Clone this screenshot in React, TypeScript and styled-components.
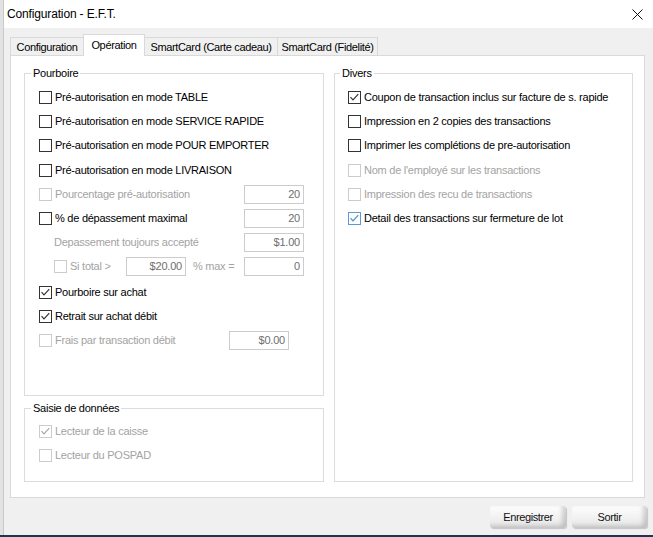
import React from "react";
import styled, { createGlobalStyle, css } from "styled-components";

const Global = createGlobalStyle`
  html, body { margin: 0; padding: 0; background: #e4e4e4; }
  body { font-family: "Liberation Sans", Arial, sans-serif; }
  #root { width: 653px; height: 537px; overflow: hidden; }
`;

const Screen = styled.div`
  width: 653px;
  height: 537px;
  box-sizing: border-box;
  padding-left: 3px;
  background: #e2e2e2;
  border-bottom: 2px solid #1d3550;
  display: flex;
`;

const Window = styled.div`
  flex: 1;
  display: flex;
  flex-direction: column;
  background: #f0f0f0;
  border-left: 1px solid #c9c9c9;
`;

const TitleBar = styled.div`
  height: 28px;
  flex: none;
  background: #ffffff;
  display: flex;
  align-items: center;
  justify-content: space-between;
  padding: 0 10px 0 3px;
  font-size: 12px;
  letter-spacing: -0.15px;
  color: #000;
`;

const CloseIcon = styled.svg`
  width: 11px;
  height: 11px;
  display: block;
`;

const Body = styled.div`
  flex: 1;
  display: flex;
  flex-direction: column;
  padding: 6px 8px 0 6px;
`;

const TabRow = styled.div`
  display: flex;
  align-items: flex-start;
  height: 22px;
  margin-bottom: -1px;
  position: relative;
  z-index: 1;
`;

const Tab = styled.div<{ $w: number; $active?: boolean }>`
  box-sizing: border-box;
  width: ${(p) => p.$w}px;
  margin-right: -1px;
  border: 1px solid #d9d9d9;
  border-bottom: none;
  display: flex;
  align-items: center;
  justify-content: center;
  font-size: 11px;
  letter-spacing: -0.35px;
  color: #000;
  white-space: nowrap;
  ${(p) =>
    p.$active
      ? css`
          height: 22px;
          background: #ffffff;
          padding-bottom: 2px;
          position: relative;
          z-index: 2;
        `
      : css`
          height: 18px;
          margin-top: 3px;
          background: #f0f0f0;
        `}
`;

const Panel = styled.div`
  height: 443px;
  box-sizing: border-box;
  flex: none;
  background: #ffffff;
  border: 1px solid #d9d9d9;
  padding: 10px 11px 15px 13px;
  display: flex;
  gap: 10px;
`;

const Column = styled.div<{ $w: number }>`
  width: ${(p) => p.$w}px;
  display: flex;
  flex-direction: column;
  gap: 5px;
`;

const Group = styled.fieldset<{ $h?: number; $pt: number; $pl: number; $pr?: number }>`
  margin: 0;
  min-width: 0;
  box-sizing: border-box;
  border: 1px solid #dcdcdc;
  padding: ${(p) => p.$pt}px ${(p) => p.$pr ?? 8}px 0 ${(p) => p.$pl}px;
  ${(p) => (p.$h ? `height: ${p.$h}px; flex: none;` : "flex: 1;")}
`;

const Legend = styled.legend<{ $offset: number }>`
  font-size: 11px;
  line-height: 14px;
  letter-spacing: -0.25px;
  padding: 0 2px;
  margin-left: ${(p) => p.$offset}px;
  color: #000;
`;

const Row = styled.div<{ $indent?: number; $mt?: number }>`
  height: 24px;
  display: flex;
  align-items: center;
  padding-left: ${(p) => p.$indent ?? 0}px;
  margin-top: ${(p) => p.$mt ?? 0}px;
`;

const Label = styled.span<{ $disabled?: boolean; $w?: number; $ml?: number }>`
  font-size: 11px;
  letter-spacing: -0.25px;
  white-space: nowrap;
  color: ${(p) => (p.$disabled ? "#a3a3a3" : "#000")};
  margin-left: ${(p) => p.$ml ?? 0}px;
  ${(p) => (p.$w ? `width: ${p.$w}px; flex: none;` : "")}
`;

type BoxState = "normal" | "disabled" | "focus";

const Box = styled.span<{ $state: BoxState }>`
  width: 13px;
  height: 13px;
  box-sizing: border-box;
  flex: none;
  margin-right: 3px;
  background: #fff;
  display: flex;
  align-items: center;
  justify-content: center;
  border: 1px solid
    ${(p) => (p.$state === "disabled" ? "#cccccc" : p.$state === "focus" ? "#5c9ad6" : "#333333")};
  color: ${(p) => (p.$state === "disabled" ? "#a8a8a8" : p.$state === "focus" ? "#4a8ed4" : "#333333")};
`;

const CheckSvg = styled.svg`
  width: 11px;
  height: 11px;
  display: block;
`;

const Field = styled.div<{ $w?: number; $mr?: number }>`
  width: ${(p) => p.$w ?? 60}px;
  height: 19px;
  box-sizing: border-box;
  flex: none;
  border: 1px solid #cccccc;
  background: #fff;
  margin-right: ${(p) => p.$mr ?? 0}px;
  display: flex;
  align-items: center;
  justify-content: flex-end;
  padding-right: 3px;
  font-size: 11px;
  letter-spacing: -0.2px;
  color: #6e6e6e;
`;

const Spacer = styled.div`
  flex: 1;
`;

const Footer = styled.div`
  display: flex;
  justify-content: flex-end;
  gap: 6px;
  margin-top: 8px;
  margin-right: -2px;
`;

const Button = styled.div<{ $w: number }>`
  width: ${(p) => p.$w}px;
  height: 22px;
  box-sizing: border-box;
  border-radius: 3px;
  display: flex;
  align-items: center;
  justify-content: center;
  font-size: 11px;
  letter-spacing: -0.4px;
  color: #111;
  background: linear-gradient(180deg, #fdfdfd 0%, #f1f1f1 55%, #e2e2e2 100%);
  box-shadow: inset -4px -2px 4px rgba(0, 0, 0, 0.16), 1px 1px 1px rgba(0, 0, 0, 0.18);
`;

const Check: React.FC<{ checked?: boolean; state?: BoxState }> = ({ checked, state = "normal" }) => (
  <Box $state={state}>
    {checked && (
      <CheckSvg viewBox="0 0 11 11">
        <polyline points="1.5,5.2 4,7.8 9.3,2.2" fill="none" stroke="currentColor" strokeWidth="1.2" />
      </CheckSvg>
    )}
  </Box>
);

export default function App() {
  return (
    <>
      <Global />
      <Screen>
        <Window>
          <TitleBar>
            <span>Configuration - E.F.T.</span>
            <CloseIcon viewBox="0 0 11 11">
              <path d="M0.5 0.5 L10.5 10.5 M10.5 0.5 L0.5 10.5" stroke="#111" strokeWidth="1" fill="none" />
            </CloseIcon>
          </TitleBar>
          <Body>
            <TabRow>
              <Tab $w={74}>Configuration</Tab>
              <Tab $w={62} $active>
                Opération
              </Tab>
              <Tab $w={134}>SmartCard (Carte cadeau)</Tab>
              <Tab $w={101}>SmartCard (Fidelité)</Tab>
            </TabRow>
            <Panel>
              <Column $w={300}>
                <Group $h={330} $pt={5} $pl={14} $pr={19}>
                  <Legend $offset={-8}>Pourboire</Legend>
                  <Row>
                    <Check />
                    <Label>Pré-autorisation en mode TABLE</Label>
                  </Row>
                  <Row>
                    <Check />
                    <Label>Pré-autorisation en mode SERVICE RAPIDE</Label>
                  </Row>
                  <Row>
                    <Check />
                    <Label>Pré-autorisation en mode POUR EMPORTER</Label>
                  </Row>
                  <Row $mt={1}>
                    <Check />
                    <Label>Pré-autorisation en mode LIVRAISON</Label>
                  </Row>
                  <Row>
                    <Check state="disabled" />
                    <Label $disabled>Pourcentage pré-autorisation</Label>
                    <Spacer />
                    <Field>20</Field>
                  </Row>
                  <Row>
                    <Check />
                    <Label>% de dépassement maximal</Label>
                    <Spacer />
                    <Field>20</Field>
                  </Row>
                  <Row $indent={15}>
                    <Label $disabled>Depassement toujours accepté</Label>
                    <Spacer />
                    <Field>$1.00</Field>
                  </Row>
                  <Row $indent={15}>
                    <Check state="disabled" />
                    <Label $disabled $w={56}>
                      Si total &gt;
                    </Label>
                    <Field>$20.00</Field>
                    <Label $disabled $ml={7}>
                      % max =
                    </Label>
                    <Spacer />
                    <Field>0</Field>
                  </Row>
                  <Row $mt={2}>
                    <Check checked />
                    <Label>Pourboire sur achat</Label>
                  </Row>
                  <Row>
                    <Check checked />
                    <Label>Retrait sur achat débit</Label>
                  </Row>
                  <Row>
                    <Check state="disabled" />
                    <Label $disabled>Frais par transaction débit</Label>
                    <Spacer />
                    <Field $mr={15}>$0.00</Field>
                  </Row>
                </Group>
                <Group $pt={4} $pl={14}>
                  <Legend $offset={-8}>Saisie de données</Legend>
                  <Row>
                    <Check checked state="disabled" />
                    <Label $disabled>Lecteur de la caisse</Label>
                  </Row>
                  <Row>
                    <Check state="disabled" />
                    <Label $disabled>Lecteur du POSPAD</Label>
                  </Row>
                </Group>
              </Column>
              <Column $w={299}>
                <Group $pt={5} $pl={13}>
                  <Legend $offset={-8}>Divers</Legend>
                  <Row>
                    <Check checked />
                    <Label>Coupon de transaction inclus sur facture de s. rapide</Label>
                  </Row>
                  <Row>
                    <Check />
                    <Label>Impression en 2 copies des transactions</Label>
                  </Row>
                  <Row>
                    <Check />
                    <Label>Imprimer les complétions de pre-autorisation</Label>
                  </Row>
                  <Row $mt={1}>
                    <Check state="disabled" />
                    <Label $disabled>Nom de l'employé sur les transactions</Label>
                  </Row>
                  <Row>
                    <Check state="disabled" />
                    <Label $disabled>Impression des recu de transactions</Label>
                  </Row>
                  <Row>
                    <Check checked state="focus" />
                    <Label>Detail des transactions sur fermeture de lot</Label>
                  </Row>
                </Group>
              </Column>
            </Panel>
            <Footer>
              <Button $w={76}>Enregistrer</Button>
              <Button $w={75}>Sortir</Button>
            </Footer>
          </Body>
        </Window>
      </Screen>
    </>
  );
}
